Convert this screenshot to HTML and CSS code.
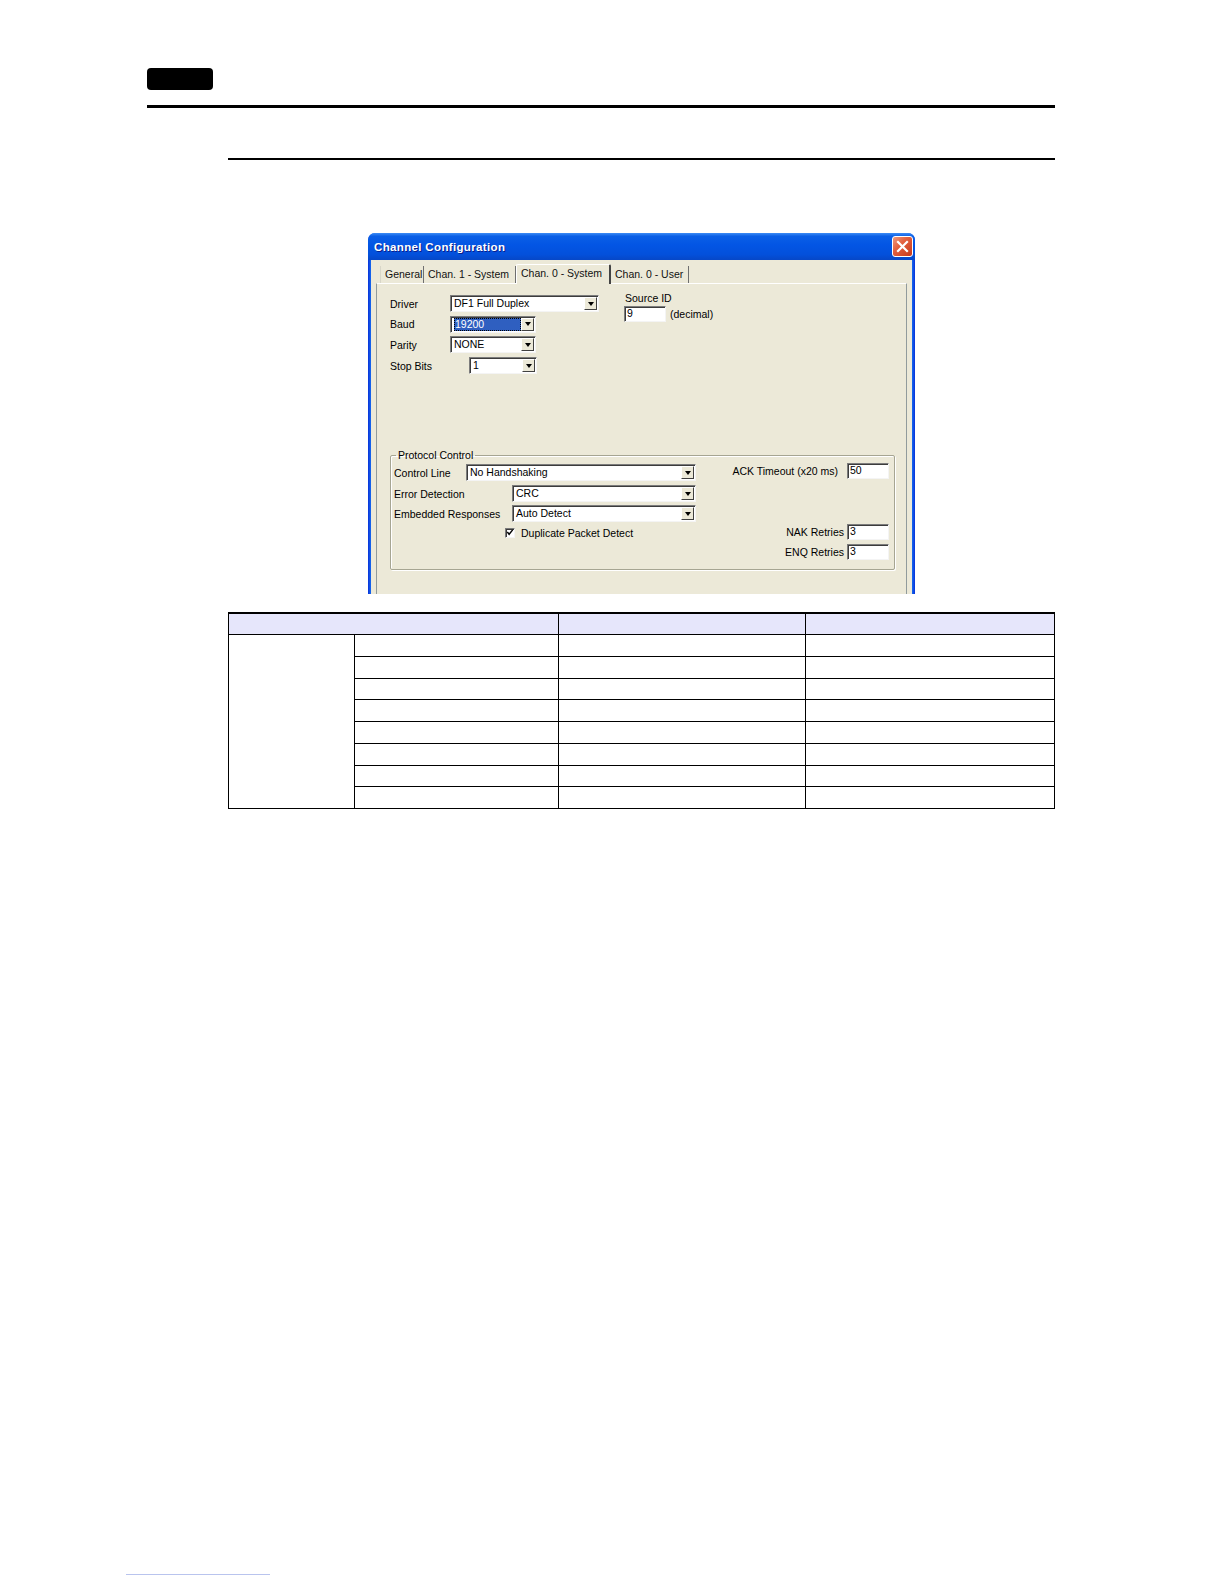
FILE: index.html
```html
<!DOCTYPE html>
<html>
<head>
<meta charset="utf-8">
<title>Channel Configuration</title>
<link rel="stylesheet" href="styles.css">
</head>
<body>
<div class="page">
  <div class="chapter-tab"></div>
  <div class="rule-top"></div>
  <div class="rule-section"></div>

  <div class="dialog">
    <div class="titlebar">
      <span class="title">Channel Configuration</span>
      <span class="close">
        <svg width="13" height="13" viewBox="0 0 13 13"><path d="M2 2 L11 11 M11 2 L2 11" stroke="#fff" stroke-width="2.2" stroke-linecap="square"/></svg>
      </span>
    </div>
    <div class="dlg-body">
      <div class="tabs">
        <div class="tab t-general">General</div>
        <div class="tab t-chan1">Chan. 1 - System</div>
        <div class="tab active">Chan. 0 - System</div>
        <div class="tab t-user">Chan. 0 - User</div>
      </div>
      <div class="panel">
        <div class="top">
          <div class="serial">
            <div class="row"><span class="lbl">Driver</span><div class="combo w-driver"><span class="val">DF1 Full Duplex</span><span class="btn"><i class="tri"></i></span></div></div>
            <div class="row"><span class="lbl">Baud</span><div class="combo w-short"><span class="val"><span class="sel">19200</span></span><span class="btn"><i class="tri"></i></span></div></div>
            <div class="row"><span class="lbl">Parity</span><div class="combo w-short"><span class="val">NONE</span><span class="btn"><i class="tri"></i></span></div></div>
            <div class="row"><span class="lbl">Stop Bits</span><div class="combo w-stop"><span class="val">1</span><span class="btn"><i class="tri"></i></span></div></div>
          </div>
          <div class="source">
            <div class="src-lbl">Source ID</div>
            <div class="src-row"><div class="edit w-src">9</div><span>(decimal)</span></div>
          </div>
        </div>

        <fieldset class="group">
          <legend>Protocol Control</legend>
          <div class="gwrap">
            <div class="gleft">
              <div class="row"><span class="glbl l-ctrl">Control Line</span><div class="combo w-ctrl"><span class="val">No Handshaking</span><span class="btn"><i class="tri"></i></span></div></div>
              <div class="row r2"><span class="glbl l-err">Error Detection</span><div class="combo w-err"><span class="val">CRC</span><span class="btn"><i class="tri"></i></span></div></div>
              <div class="row r3"><span class="glbl l-err">Embedded Responses</span><div class="combo w-err"><span class="val">Auto Detect</span><span class="btn"><i class="tri"></i></span></div></div>
              <div class="chk-row"><span class="chk"><svg width="9" height="9" viewBox="0 0 9 9"><path d="M1.5 4 L3.5 6.5 L7.5 1.5" fill="none" stroke="#000" stroke-width="1.6"/></svg></span><span>Duplicate Packet Detect</span></div>
            </div>
            <div class="gright">
              <div class="rrow ack"><span>ACK Timeout (x20 ms)</span><div class="edit w-num">50</div></div>
              <div class="rrow nak"><span>NAK Retries</span><div class="edit w-num">3</div></div>
              <div class="rrow enq"><span>ENQ Retries</span><div class="edit w-num">3</div></div>
            </div>
          </div>
        </fieldset>
      </div>
    </div>
  </div>

  <table class="spec">
    <colgroup><col class="c1"><col class="c2"><col class="c3"><col class="c4"></colgroup>
    <tr class="head"><th colspan="2"></th><th></th><th></th></tr>
    <tr><td rowspan="8"></td><td></td><td></td><td></td></tr>
    <tr><td></td><td></td><td></td></tr>
    <tr><td></td><td></td><td></td></tr>
    <tr><td></td><td></td><td></td></tr>
    <tr><td></td><td></td><td></td></tr>
    <tr><td></td><td></td><td></td></tr>
    <tr><td></td><td></td><td></td></tr>
    <tr><td></td><td></td><td></td></tr>
  </table>

  <div class="footer-link"></div>
</div>
</body>
</html>
```

FILE: styles.css
```css
html, body {
  margin: 0;
  padding: 0;
  background: #fff;
}
.page {
  width: 1224px;
  height: 1584px;
  padding-top: 68px;
  box-sizing: border-box;
  overflow: hidden;
  font-family: "Liberation Sans", Arial, sans-serif;
}
.chapter-tab {
  margin-left: 147px;
  width: 66px;
  height: 22px;
  background: #000;
  border-radius: 4px;
}
.rule-top {
  margin: 15px 0 0 147px;
  width: 908px;
  height: 3px;
  background: #000;
}
.rule-section {
  margin: 50px 0 0 228px;
  width: 827px;
  height: 2px;
  background: #000;
}

/* ---------- dialog ---------- */
.dialog {
  margin: 73px 0 0 368px;
  width: 547px;
  height: 361px;
  overflow: hidden;
  border-radius: 7px 7px 0 0;
  background: linear-gradient(90deg, #0831d9 0, #166aee 3px, #166aee calc(100% - 3px), #0831d9 100%);
  font-size: 10.5px;
  color: #000;
}
.titlebar {
  height: 27px;
  display: flex;
  align-items: center;
  justify-content: space-between;
  padding: 0 2px 0 6px;
  background: linear-gradient(#3d8cf5 0%, #0a5fe6 12%, #0355e4 45%, #0350db 80%, #0647c7 100%);
}
.title {
  color: #fff;
  font-weight: bold;
  font-size: 11.5px;
  letter-spacing: 0.35px;
  text-shadow: 1px 1px 0 #0a1e8c;
}
.close {
  width: 19px;
  height: 19px;
  border: 1px solid #fff;
  border-radius: 3px;
  background: linear-gradient(135deg, #ee9a7e 0%, #e2603f 40%, #c8391a 100%);
  display: flex;
  align-items: center;
  justify-content: center;
}
.dlg-body {
  margin: 0 3px;
  height: 334px;
  background: #ece9d8;
  padding-top: 4px;
  box-sizing: border-box;
}
.tabs {
  display: flex;
  align-items: flex-end;
  height: 19px;
  padding-left: 9px;
  position: relative;
  z-index: 1;
}
.tab {
  height: 17px;
  line-height: 16px;
  padding: 0 4px;
  border-right: 1px solid #6f6f6f;
  box-sizing: border-box;
  color: #111;
  white-space: nowrap;
}
.t-general { width: 44px; border-left: 1px solid #d8d6c8; }
.t-chan1 { width: 92px; }
.tab.active {
  width: 95px;
  height: 20px;
  line-height: 16px;
  margin-bottom: -1px;
  border: 1px solid #fff;
  border-bottom: none;
  border-right: 2px solid #444;
  border-radius: 2px 2px 0 0;
  background: #ece9d8;
  padding: 0 4px;
}
.t-user { width: 78px; }

.panel {
  margin: 0 5px;
  height: 320px;
  border: 1px solid #919b9c;
  border-top-color: #fff;
  background: #ece9d8;
  padding: 11px 12px 0 13px;
  box-sizing: border-box;
}
.top {
  display: flex;
}
.serial {
  width: 234px;
  display: flex;
  flex-direction: column;
  gap: 3.7px;
}
.row {
  display: flex;
  align-items: center;
  height: 17px;
}
.lbl {
  width: 60px;
  flex: none;
}
.combo {
  height: 17px;
  display: flex;
  box-sizing: border-box;
  background: #fff;
  border: 1px solid;
  border-color: #7c7c7c #f4f4f4 #f4f4f4 #7c7c7c;
  box-shadow: inset 1px 1px 0 #3c3c3c;
  padding: 1px 1px 1px 2px;
}
.val {
  flex: 1;
  line-height: 13px;
  padding-left: 1px;
  white-space: nowrap;
  overflow: hidden;
}
.sel {
  display: inline-block;
  background: #2f5fc0;
  color: #fff;
  width: 66px;
  height: 13px;
  outline: 1px dotted #000;
  outline-offset: -1px;
  padding-left: 1px;
}
.btn {
  width: 13px;
  flex: none;
  background: #ece9d8;
  border: 1px solid;
  border-color: #fff #404040 #404040 #fff;
  box-sizing: border-box;
  display: flex;
  align-items: center;
  justify-content: center;
}
.tri {
  width: 0;
  height: 0;
  border-left: 3.5px solid transparent;
  border-right: 3.5px solid transparent;
  border-top: 4px solid #000;
}
.w-driver { width: 149px; }
.w-short { width: 86px; }
.w-stop { width: 68px; margin-left: 19px; }

.source {
  margin-top: -4px;
}
.src-lbl {
  line-height: 14px;
  padding-left: 1px;
  margin-bottom: 1px;
}
.src-row {
  display: flex;
  align-items: center;
  gap: 4px;
}
.edit {
  height: 16px;
  box-sizing: border-box;
  background: #fff;
  border: 1px solid;
  border-color: #7c7c7c #f4f4f4 #f4f4f4 #7c7c7c;
  box-shadow: inset 1px 1px 0 #3c3c3c;
  line-height: 13px;
  padding-left: 2px;
}
.w-src { width: 42px; }
.w-num { width: 42px; }

/* ---------- group box ---------- */
.group {
  margin: 75px 0 0 0;
  width: 505px;
  box-sizing: border-box;
  border: 1px solid #a6a592;
  box-shadow: 1px 1px 0 #fff, inset 1px 1px 0 #fff;
  border-radius: 2px;
  padding: 2px 5px 9px 3px;
}
.group legend {
  margin-left: 2px;
  padding: 0 2px;
  line-height: 13px;
  font-size: 10.5px;
}
.gwrap {
  display: flex;
  justify-content: space-between;
}
.gleft {
  display: flex;
  flex-direction: column;
  width: 302px;
}
.glbl { flex: none; white-space: nowrap; }
.l-ctrl { width: 72px; }
.l-err { width: 118px; }
.w-ctrl { width: 230px; }
.w-err { width: 184px; }
.r2 { margin-top: 4.4px; }
.r3 { margin-top: 3px; }
.chk-row {
  display: flex;
  align-items: center;
  margin-top: 4px;
  margin-left: 111px;
  height: 13px;
  gap: 6px;
}
.chk {
  width: 10px;
  height: 10px;
  box-sizing: border-box;
  background: #fff;
  border: 1px solid;
  border-color: #7c7c7c #f4f4f4 #f4f4f4 #7c7c7c;
  box-shadow: inset 1px 1px 0 #3c3c3c;
  display: flex;
  align-items: center;
  justify-content: center;
}
.gright {
  display: flex;
  flex-direction: column;
  align-items: flex-end;
}
.rrow {
  display: flex;
  align-items: center;
  gap: 3px;
  white-space: nowrap;
}
.ack { margin-top: -1px; gap: 9px; }
.nak { margin-top: 45.4px; }
.enq { margin-top: 4px; }

/* ---------- table ---------- */
.spec {
  margin: 18px 0 0 228px;
  width: 826px;
  border-collapse: collapse;
  table-layout: fixed;
}
.c1 { width: 126px; }
.c2 { width: 204px; }
.c3 { width: 247px; }
.c4 { width: 249px; }
.spec th, .spec td {
  border: 1px solid #000;
  padding: 0;
  height: 20.75px;
}
.spec .head th {
  background: #e6e6fb;
  border-top: 2px solid #000;
  height: 20px;
}

.footer-link {
  margin: 765px 0 0 126px;
  width: 144px;
  height: 1px;
  background: #b9c4ee;
}
```
